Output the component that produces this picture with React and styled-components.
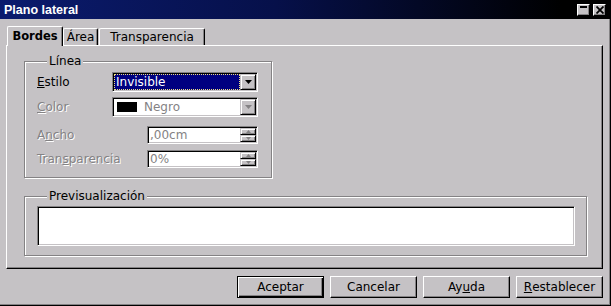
import React from "react";
import styled, { createGlobalStyle } from "styled-components";

const face = "#c5c2c5";
const shade = "#848284";

const GlobalStyle = createGlobalStyle`
  html, body {
    margin: 0;
    padding: 0;
    background: ${face};
  }
  body {
    font-family: "DejaVu Sans", "Noto Sans", sans-serif;
    font-size: 12px;
    color: #000;
  }
`;

const Window = styled.div`
  width: 611px;
  height: 306px;
  display: flex;
  flex-direction: column;
  background: ${face};
  overflow: hidden;
`;

const TitleBar = styled.div`
  flex: none;
  height: 19px;
  display: flex;
  align-items: center;
  justify-content: space-between;
  padding: 0 5px 0 4px;
  background: linear-gradient(to right, #0b1b6e 0%, #06104a 45%, #000 92%);
  color: #fff;
  font: bold 12.5px "Liberation Sans", Arial, sans-serif;
`;

const TitleButtons = styled.div`
  display: flex;
  gap: 3px;
`;

const TitleButton = styled.div`
  width: 13px;
  height: 12px;
  box-sizing: border-box;
  background: ${face};
  border: 1px solid;
  border-color: #fff #000 #000 #fff;
  box-shadow: inset -1px -1px ${shade};
  display: flex;
  align-items: flex-start;
  justify-content: center;
  padding-top: 1px;
`;

const Body = styled.div`
  flex: 1;
  display: flex;
  flex-direction: column;
  padding: 7px 8px 8px 6px;
  box-shadow: inset -1px -1px #000, inset -2px -2px ${shade};
`;

const TabStrip = styled.div`
  display: flex;
  align-items: flex-end;
  height: 19px;
  padding-left: 1px;
  position: relative;
  z-index: 1;
`;

const Tab = styled.div`
  box-sizing: border-box;
  width: ${(p) => p.$w}px;
  height: ${(p) => (p.$active ? 20 : 17)}px;
  margin-bottom: ${(p) => (p.$active ? -1 : 0)}px;
  margin-right: ${(p) => p.$gap || 0}px;
  background: ${face};
  border-top: 1px solid #fff;
  border-left: 1px solid #fff;
  border-right: 1px solid #000;
  border-radius: 2px 2px 0 0;
  box-shadow: inset -1px 0 ${shade};
  display: flex;
  align-items: center;
  justify-content: center;
  padding-bottom: ${(p) => (p.$active ? 2 : 0)}px;
  font-weight: ${(p) => (p.$active ? "bold" : "normal")};
  font-size: ${(p) => (p.$active ? "11.5px" : "12px")};
  white-space: nowrap;
  overflow: hidden;
`;

const Panel = styled.div`
  flex: 1;
  display: flex;
  flex-direction: column;
  gap: 11px;
  padding: 8px 15px 0 17px;
  border-top: 1px solid #fff;
  border-left: 1px solid #fff;
  border-right: 1px solid #000;
  border-bottom: 1px solid #000;
  box-shadow: inset -1px -1px ${shade};
`;

const Group = styled.fieldset`
  margin: 0;
  width: ${(p) => (p.$w ? `${p.$w}px` : "auto")};
  box-sizing: border-box;
  padding: ${(p) => p.$pad};
  border: 1px solid ${shade};
  box-shadow: inset 1px 1px #fff, 1px 1px #fff;
  min-width: 0;
`;

const Legend = styled.legend`
  margin-left: 10px;
  padding: 0 2px;
  line-height: 14px;
  background: ${face};
`;

const Rows = styled.div`
  display: flex;
  flex-direction: column;
`;

const Row = styled.div`
  display: flex;
  align-items: center;
  margin-top: ${(p) => p.$mt || 0}px;
  height: ${(p) => p.$h}px;
`;

const Label = styled.div`
  width: ${(p) => p.$w}px;
  color: ${(p) => (p.$off ? shade : "#000")};
  text-shadow: ${(p) => (p.$off ? "1px 1px #fff" : "none")};
  white-space: nowrap;
`;

const Field = styled.div`
  box-sizing: border-box;
  width: ${(p) => p.$w}px;
  height: 100%;
  border: 1px solid;
  border-color: ${shade} #fff #fff ${shade};
  box-shadow: inset 1px 1px #000, inset -1px -1px ${face};
  background: #fff;
  display: flex;
  align-items: stretch;
  padding: 1px;
`;

const Selection = styled.div`
  flex: 1;
  background: #000080;
  color: #fff;
  outline: 1px dotted #f0e080;
  outline-offset: -1px;
  display: flex;
  align-items: center;
  padding-left: 2px;
`;

const Value = styled.div`
  flex: 1;
  display: flex;
  align-items: center;
  gap: 7px;
  padding-left: ${(p) => p.$pl}px;
  color: ${shade};
`;

const Swatch = styled.span`
  width: 20px;
  height: 10px;
  background: #000;
`;

const ArrowButton = styled.div`
  width: 16px;
  box-sizing: border-box;
  background: ${face};
  border: 1px solid;
  border-color: ${face} #000 #000 ${face};
  box-shadow: inset 1px 1px #fff, inset -1px -1px ${shade};
  display: flex;
  align-items: center;
  justify-content: center;
`;

const SpinStack = styled.div`
  width: 16px;
  display: flex;
  flex-direction: column;
`;

const SpinButton = styled(ArrowButton)`
  flex: 1;
  width: 100%;
`;

const Preview = styled.div`
  height: 40px;
  box-sizing: border-box;
  border: 1px solid;
  border-color: ${shade} #fff #fff ${shade};
  box-shadow: inset 1px 1px #000, inset -1px -1px ${face};
  background: #fff;
`;

const Footer = styled.div`
  display: flex;
  justify-content: flex-end;
  gap: 6px;
  margin-top: 7px;
`;

const Button = styled.div`
  width: 87px;
  height: 22px;
  box-sizing: border-box;
  display: flex;
  align-items: center;
  justify-content: center;
  background: ${face};
  border: 1px solid;
  border-color: ${(p) => (p.$default ? "#000" : "#fff #000 #000 #fff")};
  box-shadow: ${(p) =>
    p.$default
      ? `inset 1px 1px #fff, inset -1px -1px #000, inset -2px -2px ${shade}`
      : `inset -1px -1px ${shade}`};
  padding-bottom: 1px;
`;

const Down = ({ off, small }) =>
  small ? (
    <svg width="5" height="3" viewBox="0 0 5 3">
      <polygon points="0,0 5,0 2.5,3" fill={off ? shade : "#000"} />
    </svg>
  ) : (
    <svg width="7" height="4" viewBox="0 0 7 4">
      <polygon points="0,0 7,0 3.5,4" fill={off ? shade : "#000"} />
    </svg>
  );

const Up = () => (
  <svg width="5" height="3" viewBox="0 0 5 3">
    <polygon points="2.5,0 5,3 0,3" fill={shade} />
  </svg>
);

const Spin = ({ value }) => (
  <Field $w={111}>
    <Value $pl={1}>{value}</Value>
    <SpinStack>
      <SpinButton>
        <Up />
      </SpinButton>
      <SpinButton>
        <Down small off />
      </SpinButton>
    </SpinStack>
  </Field>
);

export default function App() {
  return (
    <Window>
      <GlobalStyle />
      <TitleBar>
        <span>Plano lateral</span>
        <TitleButtons>
          <TitleButton>
            <svg width="7" height="8" viewBox="0 0 7 8">
              <rect x="0" y="0" width="7" height="2" fill="#000" />
            </svg>
          </TitleButton>
          <TitleButton>
            <svg width="8" height="8" viewBox="0 0 8 8">
              <path d="M0.5 0.5 L7.5 7.5 M7.5 0.5 L0.5 7.5" stroke="#000" strokeWidth="1.8" />
            </svg>
          </TitleButton>
        </TitleButtons>
      </TitleBar>

      <Body>
        <TabStrip>
          <Tab $active $w={56}>
            Bordes
          </Tab>
          <Tab $w={35} $gap={1}>
            Área
          </Tab>
          <Tab $w={106}>Transparencia</Tab>
        </TabStrip>

        <Panel>
          <Group $w={248} $pad="4px 0 9px 12px">
            <Legend>Línea</Legend>
            <Rows>
              <Row $h={20}>
                <Label $w={75}>
                  <u>E</u>stilo
                </Label>
                <Field $w={146}>
                  <Selection>Invisible</Selection>
                  <ArrowButton>
                    <Down />
                  </ArrowButton>
                </Field>
              </Row>
              <Row $h={20} $mt={5}>
                <Label $w={75} $off>
                  <u>C</u>olor
                </Label>
                <Field $w={146}>
                  <Value $pl={3}>
                    <Swatch />
                    Negro
                  </Value>
                  <ArrowButton>
                    <Down off />
                  </ArrowButton>
                </Field>
              </Row>
              <Row $h={18} $mt={9}>
                <Label $w={110} $off>
                  A<u>n</u>cho
                </Label>
                <Spin value=",00cm" />
              </Row>
              <Row $h={18} $mt={6}>
                <Label $w={110} $off>
                  Tran<u>s</u>parencia
                </Label>
                <Spin value="0%" />
              </Row>
            </Rows>
          </Group>

          <Group $pad="3px 11px 9px 12px">
            <Legend>Previsualización</Legend>
            <Preview />
          </Group>
        </Panel>

        <Footer>
          <Button $default>Aceptar</Button>
          <Button>Cancelar</Button>
          <Button>
            Ay<u>u</u>da
          </Button>
          <Button>
            <u>R</u>establecer
          </Button>
        </Footer>
      </Body>
    </Window>
  );
}
